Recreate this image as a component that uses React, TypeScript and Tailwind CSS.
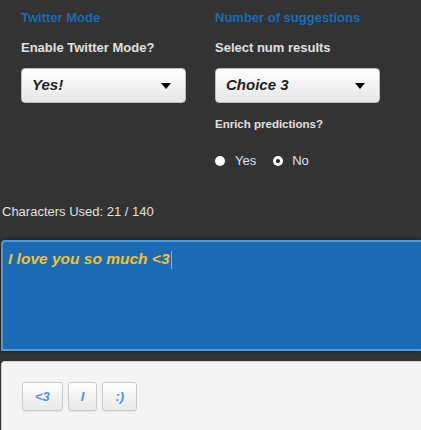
import React from "react";

const font = { fontFamily: '"Liberation Sans", Arial, sans-serif' };

function Select({ value }: { value: string }) {
  return (
    <div className="flex h-[35px] w-[165px] items-center justify-between rounded-[4px] border border-[#bdbdbd] bg-gradient-to-b from-white to-[#e6e6e6] pl-[10px] pr-[14px]">
      <span className="text-[15px] font-bold italic text-[#222]">{value}</span>
      <span className="h-0 w-0 border-x-[5px] border-t-[6px] border-x-transparent border-t-black" />
    </div>
  );
}

export default function App() {
  const buttons = ["<3", "I", ":)"];
  return (
    <div style={font} className="h-[430px] w-[421px] overflow-hidden bg-[#333333]">
      <div className="flex pl-[21px] pt-[10px]">
        <div className="w-[194px]">
          <h2 className="h-[16px] text-[13px] font-bold leading-[16px] text-[#1b6bb5]">Twitter Mode</h2>
          <p className="mt-[14px] h-[16px] text-[13px] font-bold leading-[16px] text-[#e0e0e0]">Enable Twitter Mode?</p>
          <div className="mt-[12px]">
            <Select value="Yes!" />
          </div>
        </div>
        <div>
          <h2 className="h-[16px] text-[13px] font-bold leading-[16px] text-[#1b6bb5]">Number of suggestions</h2>
          <p className="mt-[14px] h-[16px] text-[13px] font-bold leading-[16px] text-[#e0e0e0]">Select num results</p>
          <div className="mt-[12px]">
            <Select value="Choice 3" />
          </div>
          <p className="mt-[14px] h-[14px] text-[11.5px] font-bold leading-[14px] text-[#e0e0e0]">Enrich predictions?</p>
          <div className="mt-[22px] flex h-[16px] items-center text-[13px] text-[#dde4ee]">
            <span className="h-[10px] w-[10px] rounded-full bg-white" />
            <span className="ml-[10px]">Yes</span>
            <span className="ml-[17px] flex h-[10px] w-[10px] items-center justify-center rounded-full bg-white">
              <span className="h-[4px] w-[4px] rounded-full bg-[#222]" />
            </span>
            <span className="ml-[9px]">No</span>
          </div>
        </div>
      </div>

      <p className="mt-[35px] h-[16px] pl-[2px] text-[13px] leading-[16px] text-[#e0e0e0]">Characters Used: 21 / 140</p>

      <div className="ml-[1px] mt-[20px] h-[111px] rounded-tl-[4px] border-2 border-r-0 border-[#4a9be0] bg-[#1a6bb3] pl-[5px] pt-[5px] shadow-[0_0_4px_rgba(0,0,0,0.5)]">
        <span className="text-[15.5px] font-bold italic leading-[20px] text-[#f2c12e]">I love you so much &lt;3</span>
        <span className="ml-[1px] inline-block h-[18px] w-[1px] bg-[#e8a030] align-middle" />
      </div>

      <div className="ml-[1px] mt-[10px] h-[80px] rounded-tl-[4px] border border-r-0 border-[#d0d0d0] bg-[#f4f4f4] pl-[20px] pt-[20px]">
        <div className="flex gap-[5px]">
          {buttons.map((b) => (
            <button
              key={b}
              className="h-[29px] rounded-[3px] border border-[#cccccc] bg-gradient-to-b from-white to-[#e8e8e8] px-[12px] text-[13px] font-bold italic text-[#5a8ee6] shadow-[0_1px_1px_rgba(0,0,0,0.08)]"
            >
              {b}
            </button>
          ))}
        </div>
      </div>
    </div>
  );
}
